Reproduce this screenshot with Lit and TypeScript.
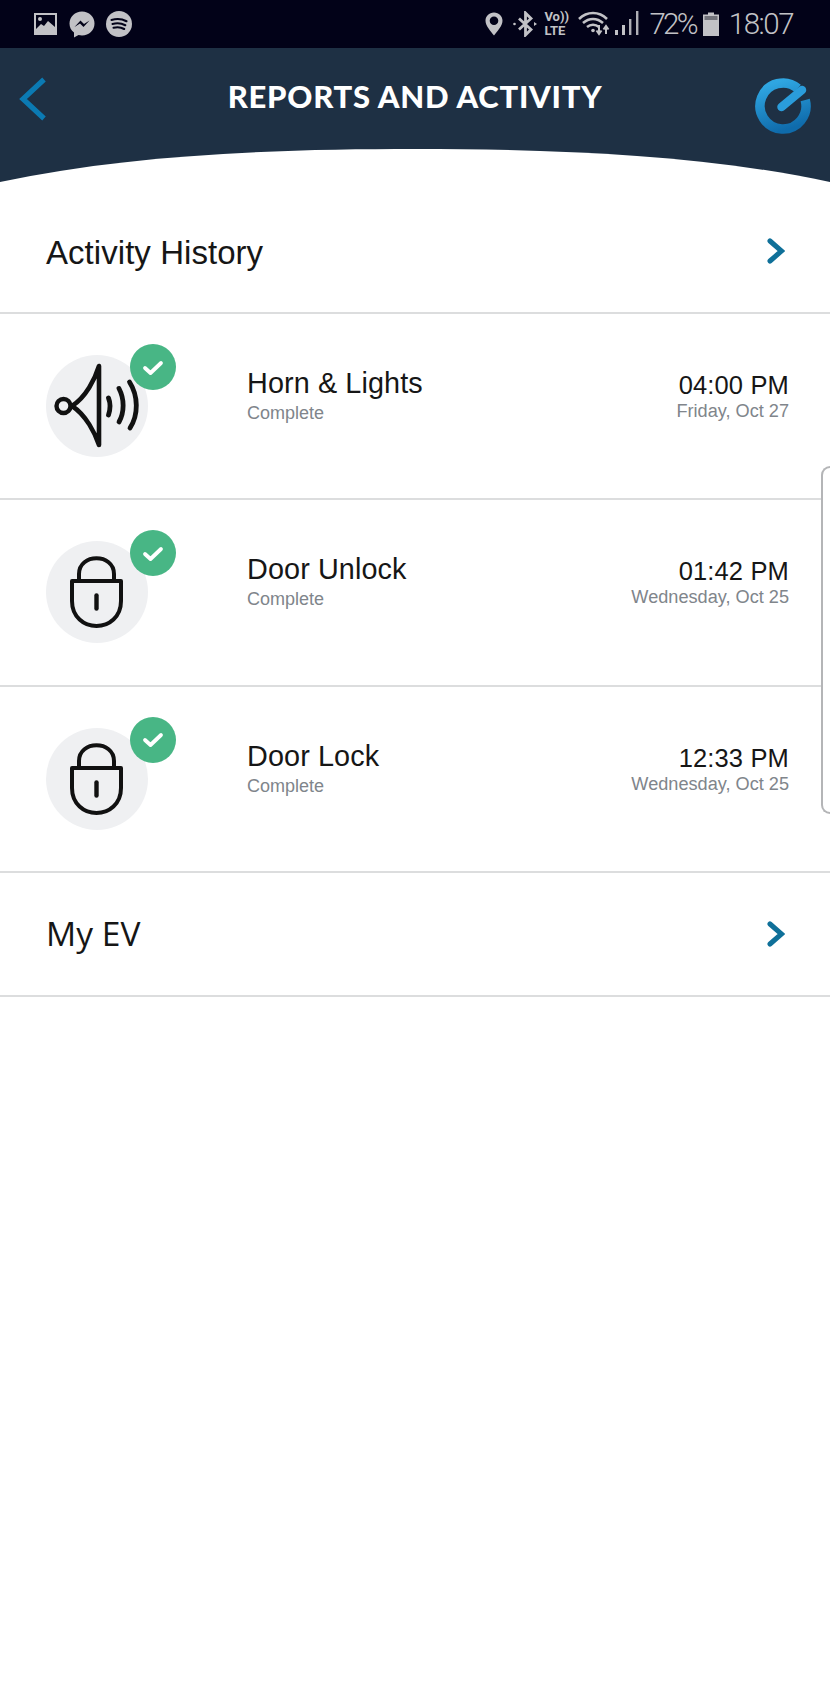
import { LitElement, html, css, svg } from "lit";
import { customElement } from "lit/decorators.js";

const speaker = svg`
  <path d="M53 11 L53 90 C49 78 40 60 26 51 C40 42 49 24 53 11 Z" fill="none" stroke="#111" stroke-width="4.6" stroke-linejoin="round"/>
  <circle cx="17.5" cy="51" r="7" fill="none" stroke="#111" stroke-width="4.4"/>
  <path d="M62.5 43 C64.5 48 64.5 54 62.5 60" fill="none" stroke="#111" stroke-width="4.8" stroke-linecap="round"/>
  <path d="M73 33.5 C78.5 44 78.5 57 73 67" fill="none" stroke="#111" stroke-width="4.8" stroke-linecap="round"/>
  <path d="M83.5 27 C92.5 41 92.5 60 84 73" fill="none" stroke="#111" stroke-width="4.8" stroke-linecap="round"/>`;

const lock = svg`
  <path d="M33 40 L33 33 C33 12 68 12 68 33 L68 40" fill="none" stroke="#111" stroke-width="4"/>
  <path d="M26 40 L75 40 L75 60 C75 76 63 85 50.5 85 C38 85 26 76 26 60 Z" fill="none" stroke="#111" stroke-width="4" stroke-linejoin="round"/>
  <path d="M50.5 54.5 L50.5 67.5" fill="none" stroke="#111" stroke-width="4.4" stroke-linecap="round"/>`;

const chevron = html`
  <svg class="chev" viewBox="0 0 18 26" width="18" height="26">
    <path d="M3 3 L14.5 13 L3 23" fill="none" stroke="#0f7099" stroke-width="5" stroke-linecap="round" stroke-linejoin="miter"/>
  </svg>`;

const activities = [
  { title: "Horn & Lights", time: "04:00 PM", date: "Friday, Oct 27", icon: speaker },
  { title: "Door Unlock", time: "01:42 PM", date: "Wednesday, Oct 25", icon: lock },
  { title: "Door Lock", time: "12:33 PM", date: "Wednesday, Oct 25", icon: lock },
];

@customElement("app-root")
export class AppRoot extends LitElement {
  static styles = css`
    :host {
      display: block;
      position: relative;
      width: 830px;
      height: 1707px;
      overflow: hidden;
      background: #fff;
      font-family: "Liberation Sans", Arial, sans-serif;
      color: #161616;
    }

    /* barra de status */
    .status {
      height: 48px;
      background: #020218;
      color: #c2c2c6;
      display: flex;
      align-items: center;
      padding: 0 37px 0 33px;
      box-sizing: border-box;
      font-family: Roboto, sans-serif;
    }
    .status svg {
      display: block;
      flex: none;
    }
    .notif {
      display: flex;
      gap: 11px;
      align-items: center;
    }
    .spacer {
      flex: 1;
    }
    .pin {
      margin-right: 10px;
    }
    .volte {
      font-size: 13px;
      line-height: 14px;
      font-weight: 700;
      margin: 0 8px 0 6px;
      width: 26px;
    }
    .pct {
      font-size: 29.5px;
      font-weight: 300;
      letter-spacing: -2.7px;
      margin: 0 7px 0 9px;
    }
    .clock {
      font-size: 29.5px;
      font-weight: 300;
      margin-left: 10px;
      letter-spacing: -1.5px;
    }

    /* cabeçalho */
    .header {
      position: relative;
      height: 141px;
      background: #1e3044;
      display: flex;
      justify-content: center;
      padding-top: 28px;
      box-sizing: border-box;
    }
    .header h1 {
      margin: 0;
      font-family: Lato, sans-serif;
      font-weight: 900;
      font-size: 31px;
      line-height: 40px;
      letter-spacing: 0.75px;
      color: #fff;
    }
    .back {
      position: absolute;
      left: 18px;
      top: 29px;
    }
    .logo {
      position: absolute;
      left: 755px;
      top: 30px;
    }
    .curve {
      position: absolute;
      left: 0;
      bottom: 0;
      display: block;
    }

    /* linhas */
    .link {
      height: 125px;
      box-sizing: border-box;
      border-bottom: 2px solid #dcddde;
      display: flex;
      align-items: center;
      justify-content: space-between;
      padding: 0 45px 0 46px;
      font-size: 33px;
      letter-spacing: 0.05px;
    }
    .link > span {
      position: relative;
      top: 2px;
    }
    .link.ev {
      height: 124px;
      font-family: "Open Sans", sans-serif;
      font-size: 33.5px;
    }
    .link.ev > span {
      top: -1px;
    }
    .row {
      height: 186.33px;
      box-sizing: border-box;
      border-bottom: 2px solid #dcddde;
      display: grid;
      grid-template-columns: 201px 1fr auto;
      padding: 41px 41px 0 46px;
    }
    .icon {
      position: relative;
      width: 102px;
      height: 102px;
      border-radius: 50%;
      background: #eff0f2;
    }
    .icon > svg {
      display: block;
    }
    .badge {
      position: absolute;
      left: 84px;
      top: -11px;
      width: 46px;
      height: 46px;
      border-radius: 50%;
      background: #48b685;
      display: flex;
      align-items: center;
      justify-content: center;
    }
    .main {
      padding-top: 13px;
    }
    .when {
      padding-top: 15px;
      text-align: right;
    }
    .title {
      font-size: 28.8px;
      line-height: 30px;
      letter-spacing: 0.1px;
    }
    .time {
      font-size: 25.5px;
      line-height: 30px;
      letter-spacing: 0.15px;
    }
    .sub {
      font-size: 18px;
      line-height: 20px;
      margin-top: 5px;
      color: #80858b;
    }
    .when .sub {
      font-size: 18.15px;
      margin-top: 1px;
    }

    /* alça do painel lateral */
    .edge {
      position: absolute;
      left: 821px;
      top: 466px;
      width: 9px;
      height: 348px;
      box-sizing: border-box;
      border: 2px solid #b4b5b7;
      border-right: 0;
      border-radius: 10px 0 0 10px;
      background: #fff;
    }
  `;

  render() {
    return html`
      <div class="status">
        <div class="notif">
          <svg width="25" height="24" viewBox="0 0 25 24">
            <rect x="1" y="1" width="23" height="22" fill="#c2c2c6"/>
            <rect x="3" y="3" width="19" height="14" fill="#020218"/>
            <circle cx="7" cy="7" r="2" fill="#c2c2c6"/>
            <path d="M3 17 L8 12 L11 14 L15 9 L22 15 L22 19 L3 19 Z" fill="#c2c2c6"/>
          </svg>
          <svg width="26" height="27" viewBox="0 0 26 27">
            <path d="M13 0.5 C6 0.5 0.5 5.7 0.5 12.5 C0.5 16.3 2.2 19.5 5 21.6 L5 26.5 L9.5 24 C10.6 24.3 11.8 24.5 13 24.5 C20 24.5 25.5 19.3 25.5 12.5 C25.5 5.7 20 0.5 13 0.5 Z" fill="#c2c2c6"/>
            <path d="M5.5 16 L11.5 9.5 L15 13 L20.5 9.5 L14.5 16 L11 12.5 Z" fill="#020218"/>
          </svg>
          <svg width="26" height="26" viewBox="0 0 26 26">
            <circle cx="13" cy="13" r="13" fill="#c2c2c6"/>
            <path d="M5.5 9 C10 7.5 16 7.8 20.5 10.2 M6.5 13 C10.5 11.8 15.5 12.2 19.3 14.2 M7.5 16.8 C11 15.9 15 16.2 18.2 18" fill="none" stroke="#020218" stroke-width="2.1" stroke-linecap="round"/>
          </svg>
        </div>
        <div class="spacer"></div>
        <svg class="pin" width="18" height="24" viewBox="0 0 18 24">
          <path d="M9 0.5 C4 0.5 0.5 4.2 0.5 8.8 C0.5 14 6 19.5 9 23.5 C12 19.5 17.5 14 17.5 8.8 C17.5 4.2 14 0.5 9 0.5 Z M9 4.5 C11.4 4.5 13.3 6.4 13.3 8.8 C13.3 11.2 11.4 13 9 13 C6.6 13 4.7 11.2 4.7 8.8 C4.7 6.4 6.6 4.5 9 4.5 Z" fill="#c2c2c6" fill-rule="evenodd"/>
        </svg>
        <svg width="25" height="26" viewBox="0 0 25 26">
          <path d="M6 7.5 L18 18.5 L12.5 24 L12.5 2 L18 7.5 L6 18.5" fill="none" stroke="#c2c2c6" stroke-width="2.8"/>
          <circle cx="1.5" cy="13" r="1.3" fill="#c2c2c6"/>
          <path d="M21 11 L24 13 L21 15 Z" fill="#c2c2c6"/>
        </svg>
        <div class="volte">Vo))<br />LTE</div>
        <svg width="62" height="28" viewBox="0 0 62 28">
          <path d="M1 9 C9 1 21 1 29 9 M5 13 C11 7.5 19 7.5 25 13 M9 17 C12.5 14 17.5 14 21 17" fill="none" stroke="#c2c2c6" stroke-width="2.5"/>
          <circle cx="15" cy="20.5" r="1.8" fill="#c2c2c6"/>
          <path d="M21 15 L21 23 M18.5 20.5 L21 24 L23.5 20.5 M28 24 L28 16 M25.5 19.5 L28 16 L30.5 19.5" fill="none" stroke="#c2c2c6" stroke-width="2"/>
          <rect x="37" y="20" width="3" height="5" fill="#c2c2c6"/>
          <rect x="44" y="15" width="3" height="10" fill="#c2c2c6"/>
          <rect x="51" y="9" width="2.4" height="16" fill="#c2c2c6" opacity=".9"/>
          <rect x="58" y="1" width="2.4" height="24" fill="#c2c2c6" opacity=".9"/>
        </svg>
        <span class="pct">72%</span>
        <svg width="16" height="24" viewBox="0 0 16 24">
          <path d="M5 0.5 L11 0.5 L11 2.5 L16 2.5 L16 24 L0 24 L0 2.5 L5 2.5 Z" fill="#c2c2c6"/>
          <rect x="1.5" y="4" width="13" height="4" fill="#71727a"/>
        </svg>
        <span class="clock">18:07</span>
      </div>

      <div class="header">
        <svg class="back" width="30" height="44" viewBox="0 0 30 44">
          <path d="M26 2.5 L5 22 L26 41.5" fill="none" stroke="#0b7ab3" stroke-width="5.2"/>
        </svg>
        <h1>REPORTS AND ACTIVITY</h1>
        <svg class="logo" width="56" height="56" viewBox="0 0 56 56">
          <defs>
            <linearGradient id="ring" x1="0.3" y1="0" x2="0.6" y2="1">
              <stop offset="0" stop-color="#2fa6e2"/>
              <stop offset="1" stop-color="#0f6bab"/>
            </linearGradient>
          </defs>
          <path d="M42.8 10.4 A23 23 0 1 0 50.2 22" fill="none" stroke="url(#ring)" stroke-width="9.5"/>
          <path d="M26.5 29 L47 12" fill="none" stroke="#2a9cdb" stroke-width="8.5" stroke-linecap="round"/>
        </svg>
        <svg class="curve" width="830" height="40" viewBox="0 0 830 40">
          <path d="M0 33 C130 5 280 0 415 0 C550 0 700 5 830 33 L830 40 L0 40 Z" fill="#fff"/>
        </svg>
      </div>

      <div class="link"><span>Activity History</span>${chevron}</div>

      ${activities.map(
        (a) => html`
          <div class="row">
            <div class="icon">
              <svg width="102" height="102" viewBox="0 0 102 102">${a.icon}</svg>
              <div class="badge">
                <svg width="22" height="17" viewBox="0 0 22 17">
                  <path d="M3 9 L8.5 14 L19 4" fill="none" stroke="#fff" stroke-width="3.8" stroke-linecap="round" stroke-linejoin="round"/>
                </svg>
              </div>
            </div>
            <div class="main">
              <div class="title">${a.title}</div>
              <div class="sub">Complete</div>
            </div>
            <div class="when">
              <div class="time">${a.time}</div>
              <div class="sub">${a.date}</div>
            </div>
          </div>
        `
      )}

      <div class="link ev"><span>My EV</span>${chevron}</div>

      <div class="edge"></div>
    `;
  }
}
